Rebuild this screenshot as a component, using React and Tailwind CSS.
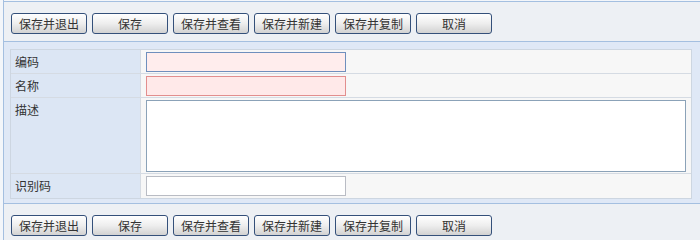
const actions = ["保存并退出", "保存", "保存并查看", "保存并新建", "保存并复制", "取消"];

const Toolbar = ({ top }) => (
  <div
    className={
      "flex gap-[5px] pl-[7px] pt-[11px] bg-[#edf0f4] border-[#a4bfe0] " +
      (top ? "h-[41px] border-t border-b" : "h-[38px] border-t")
    }
  >
    {actions.map((label) => (
      <button
        key={label}
        className="w-[76px] h-[21px] rounded-[3px] border border-[#34507a] bg-linear-to-b from-[#ffffff] via-[#eeeeee] to-[#d2d2d2] text-[12px] leading-[19px] text-[#333]"
      >
        {label}
      </button>
    ))}
  </div>
);

const Row = ({ label, children, tall }) => (
  <div className={"flex border-b border-[#d5dbe3] last:border-b-0 " + (tall ? "h-[76px]" : "h-[24px]")}>
    <div className="w-[130px] shrink-0 bg-[#dce6f4] border-r border-[#d5dbe3] pl-[4px] leading-[23px] text-[12px] text-[#333]">
      {label}
    </div>
    <div className={"flex-1 pl-[5px] flex " + (tall ? "items-start pt-[2px]" : "items-center")}>
      {children}
    </div>
  </div>
);

export default function App() {
  return (
    <div
      className="w-[700px] h-[240px] overflow-hidden bg-[#f3f6fa] pl-[3px]"
      style={{ fontFamily: '"Noto Sans CJK SC", "Liberation Sans", sans-serif' }}
    >
      <div className="h-full border-l border-[#a4bfe0] pt-[1px]">
        <Toolbar top />

        {/* Form */}
        <div className="bg-[#dfe8f6] pl-[6px] pr-[8px] pt-[7px] pb-[4px]">
          <div className="border border-[#cdd6e1] bg-[#f7f7f7]">
            <Row label="编码">
              <input className="w-[200px] h-[20px] border border-[#6f8fbd] bg-[#ffeded] outline-none" />
            </Row>
            <Row label="名称">
              <input className="w-[200px] h-[20px] border border-[#e28e8e] bg-[#ffe9e9] outline-none" />
            </Row>
            <Row label="描述" tall>
              <textarea className="w-[540px] h-[72px] border border-[#8ba2b8] bg-white outline-none resize-none" />
            </Row>
            <Row label="识别码">
              <input className="w-[200px] h-[20px] border border-[#b9bcc4] bg-white outline-none" />
            </Row>
          </div>
        </div>

        <Toolbar />
      </div>
    </div>
  );
}
